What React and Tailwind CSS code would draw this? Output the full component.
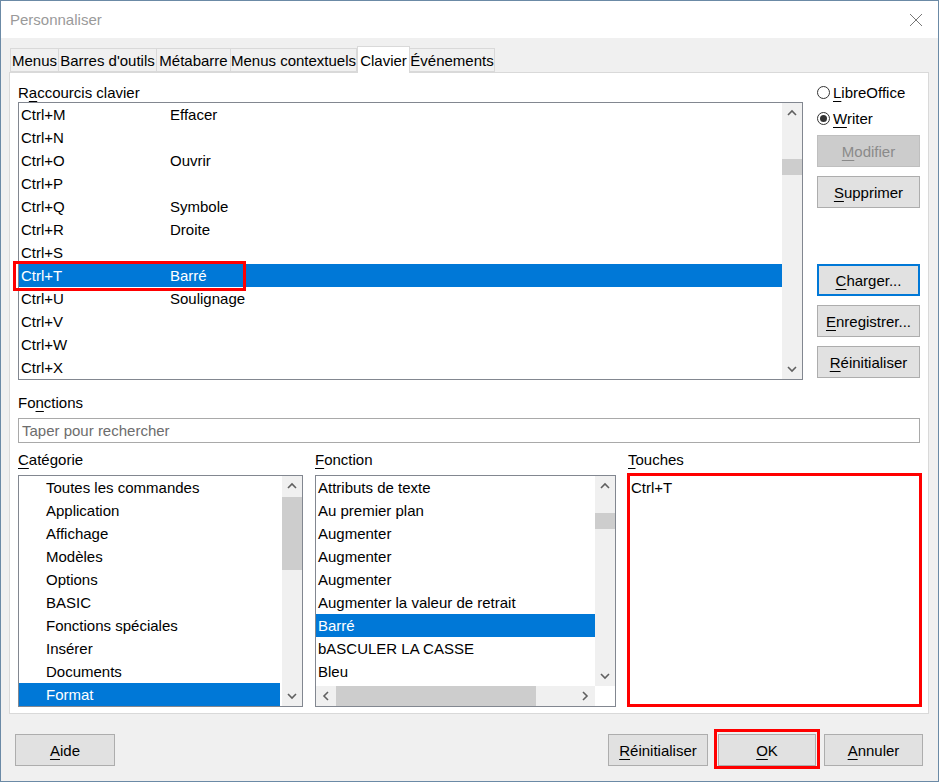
import React from "react";

const shortcuts = [
  ["Ctrl+M", "Effacer"],
  ["Ctrl+N", ""],
  ["Ctrl+O", "Ouvrir"],
  ["Ctrl+P", ""],
  ["Ctrl+Q", "Symbole"],
  ["Ctrl+R", "Droite"],
  ["Ctrl+S", ""],
  ["Ctrl+T", "Barré"],
  ["Ctrl+U", "Soulignage"],
  ["Ctrl+V", ""],
  ["Ctrl+W", ""],
  ["Ctrl+X", ""],
];

const categories = [
  "Toutes les commandes",
  "Application",
  "Affichage",
  "Modèles",
  "Options",
  "BASIC",
  "Fonctions spéciales",
  "Insérer",
  "Documents",
  "Format",
];

const functions = [
  "Attributs de texte",
  "Au premier plan",
  "Augmenter",
  "Augmenter",
  "Augmenter",
  "Augmenter la valeur de retrait",
  "Barré",
  "bASCULER LA CASSE",
  "Bleu",
];

const tabs = [
  ["Menus", "w-[49px]"],
  ["Barres d'outils", "w-[99px]"],
  ["Métabarre", "w-[75px]"],
  ["Menus contextuels", "w-[127px]"],
  ["Clavier", "w-[53px]"],
  ["Événements", "w-[86px]"],
];

// underlined access key
const K = ({ children }) => (
  <span className="underline underline-offset-[3px] decoration-1">{children}</span>
);

const Chevron = ({ dir }) => {
  const pts = {
    up: "1,6 5,2 9,6",
    down: "1,2 5,6 9,2",
    left: "6,1 2,5 6,9",
    right: "2,1 6,5 2,9",
  }[dir];
  const vert = dir === "up" || dir === "down";
  return (
    <svg width={vert ? 10 : 8} height={vert ? 8 : 10} viewBox={vert ? "0 0 10 8" : "0 0 8 10"}>
      <polyline points={pts} fill="none" stroke="#606060" strokeWidth="1.6" />
    </svg>
  );
};

const VScroll = ({ thumb }) => (
  <div className="w-[20px] h-full bg-[#f0f0f0] flex flex-col shrink-0">
    <div className="h-[20px] flex items-center justify-center shrink-0">
      <Chevron dir="up" />
    </div>
    <div className="flex-1">
      <div className={"bg-[#cdcdcd] " + thumb} />
    </div>
    <div className="h-[20px] flex items-center justify-center shrink-0">
      <Chevron dir="down" />
    </div>
  </div>
);

const btnLook = {
  normal: "bg-[#e1e1e1] border border-[#adadad]",
  disabled: "bg-[#cccccc] border border-[#bfbfbf] text-[#8a8a8a]",
  focus: "bg-[#e1e1e1] border-2 border-[#0078d7]",
};

const Btn = ({ children, className = "", look = "normal" }) => (
  <div className={"h-[32px] flex items-center justify-center " + btnLook[look] + " " + className}>
    {children}
  </div>
);

const Radio = ({ checked, children }) => (
  <div className="h-[19px] flex items-center gap-[3px]">
    <div className="w-[13px] h-[13px] rounded-full border border-[#333333] bg-white flex items-center justify-center">
      {checked && <div className="w-[7px] h-[7px] rounded-full bg-[#333333]" />}
    </div>
    <span>{children}</span>
  </div>
);

export default function App() {
  return (
    <div className="w-[939px] h-[782px] border border-[#6b8aa6] bg-[#f0f0f0] flex flex-col text-[15px] leading-[19px] text-black font-['Liberation_Sans',Arial,sans-serif] overflow-hidden">
      {/* title bar */}
      <div className="h-[37px] bg-white flex items-center justify-between pl-[9px] pr-[15px] shrink-0">
        <span className="text-[#9a9a9a]">Personnaliser</span>
        <svg width="14" height="14" viewBox="0 0 14 14">
          <path d="M1 1L13 13M13 1L1 13" stroke="#777777" strokeWidth="1" />
        </svg>
      </div>

      {/* tabs */}
      <div className="mt-[8px] ml-[9px] flex items-end h-[26px] relative z-10">
        {tabs.map(([t, w]) =>
          t === "Clavier" ? (
            <div
              key={t}
              className={w + " h-[27px] -mb-[1px] bg-white border border-b-0 border-[#d9d9d9] flex items-center justify-center whitespace-nowrap"}
            >
              {t}
            </div>
          ) : (
            <div
              key={t}
              className={w + " h-[24px] bg-[#f0f0f0] border border-[#d9d9d9] -ml-px first:ml-0 flex items-center justify-center whitespace-nowrap"}
            >
              {t}
            </div>
          )
        )}
      </div>

      {/* panel */}
      <div className="ml-[8px] w-[920px] h-[642px] bg-white border border-[#d9d9d9] px-[8px] pt-[10px] flex flex-col">
        <div className="flex gap-[14px]">
          <div className="w-[785px] flex flex-col">
            <div className="h-[19px]">
              R<K>a</K>ccourcis clavier
            </div>
            <div className="h-[278px] border border-[#828790] flex relative">
              <div className="flex-1 flex flex-col">
                {shortcuts.map(([k, f]) => (
                  <div
                    key={k}
                    className={
                      "h-[23px] flex items-center pl-[2px] " +
                      (k === "Ctrl+T" ? "bg-[#0078d7] text-white" : "")
                    }
                  >
                    <span className="w-[149px]">{k}</span>
                    <span>{f}</span>
                  </div>
                ))}
              </div>
              <VScroll thumb="mt-[36px] h-[16px]" />
              <div className="absolute left-[-6px] top-[158px] w-[233px] h-[30px] border-[3px] border-[#ff0000]" />
            </div>
          </div>
          <div className="w-[103px] flex flex-col">
            <Radio>
              <K>L</K>ibreOffice
            </Radio>
            <div className="mt-[7px]">
              <Radio checked>
                <K>W</K>riter
              </Radio>
            </div>
            <Btn look="disabled" className="mt-[7px]">
              <span>
                <K>M</K>odifier
              </span>
            </Btn>
            <Btn className="mt-[9px]">
              <span>
                <K>S</K>upprimer
              </span>
            </Btn>
            <Btn look="focus" className="mt-[56px]">
              <span>
                <K>C</K>harger...
              </span>
            </Btn>
            <Btn className="mt-[9px]">
              <span>
                <K>E</K>nregistrer...
              </span>
            </Btn>
            <Btn className="mt-[9px]">
              <span>
                <K>R</K>éinitialiser
              </span>
            </Btn>
          </div>
        </div>

        <div className="mt-[13px] h-[19px]">
          Fo<K>n</K>ctions
        </div>
        <div className="mt-[6px] h-[25px] border border-[#a9a9a9] flex items-center pl-[3px] text-[#6d6d6d]">
          Taper pour rechercher
        </div>

        <div className="mt-[7px] flex">
          {/* Catégorie */}
          <div className="w-[285px] flex flex-col">
            <div className="h-[19px]">
              <K>C</K>atégorie
            </div>
            <div className="mt-[6px] h-[232px] border border-[#828790] flex">
              <div className="flex-1 flex flex-col pr-[2px]">
                {categories.map((c) => (
                  <div
                    key={c}
                    className={
                      "h-[23px] flex items-center pl-[27px] " +
                      (c === "Format" ? "bg-[#0078d7] text-white" : "")
                    }
                  >
                    {c}
                  </div>
                ))}
              </div>
              <VScroll thumb="mt-[1px] h-[73px]" />
            </div>
          </div>

          {/* Fonction */}
          <div className="w-[301px] ml-[12px] flex flex-col">
            <div className="h-[19px]">
              <K>F</K>onction
            </div>
            <div className="mt-[6px] h-[232px] border border-[#828790] flex flex-col">
              <div className="flex h-[210px]">
                <div className="flex-1 flex flex-col">
                  {functions.map((f, i) => (
                    <div
                      key={i}
                      className={
                        "h-[23px] flex items-center pl-[2px] whitespace-nowrap overflow-hidden " +
                        (f === "Barré" ? "bg-[#0078d7] text-white" : "")
                      }
                    >
                      {f}
                    </div>
                  ))}
                </div>
                <VScroll thumb="mt-[17px] h-[16px]" />
              </div>
              <div className="flex h-[20px]">
                <div className="flex-1 bg-[#f0f0f0] flex items-center">
                  <div className="w-[20px] flex justify-center">
                    <Chevron dir="left" />
                  </div>
                  <div className="w-[200px] h-full bg-[#cdcdcd]" />
                  <div className="flex-1" />
                  <div className="w-[20px] flex justify-center">
                    <Chevron dir="right" />
                  </div>
                </div>
                <div className="w-[20px] bg-white" />
              </div>
            </div>
          </div>

          {/* Touches */}
          <div className="w-[293px] ml-[11px] flex flex-col">
            <div className="h-[19px] pl-[1px]">
              <K>T</K>ouches
            </div>
            <div className="mt-[4px] -mr-[2px] h-[234px] border-[3px] border-[#ff0000] pl-[1px] pt-[2px]">
              Ctrl+T
            </div>
          </div>
        </div>
      </div>

      {/* bottom buttons */}
      <div className="mt-[15px] flex items-start pl-[14px] pr-[15px]">
        <Btn className="mt-[5px] w-[100px]">
          <span>
            <K>A</K>ide
          </span>
        </Btn>
        <div className="flex-1" />
        <Btn className="mt-[5px] w-[100px]">
          <span>
            <K>R</K>éinitialiser
          </span>
        </Btn>
        <div className="ml-[6px] w-[106px] h-[40px] border-[3px] border-[#ff0000] px-[1px] pt-[2px]">
          <Btn className="w-full">
            <span>
              <K>O</K>K
            </span>
          </Btn>
        </div>
        <Btn className="ml-[4px] mt-[5px] w-[99px]">
          <span>
            <K>A</K>nnuler
          </span>
        </Btn>
      </div>
    </div>
  );
}
